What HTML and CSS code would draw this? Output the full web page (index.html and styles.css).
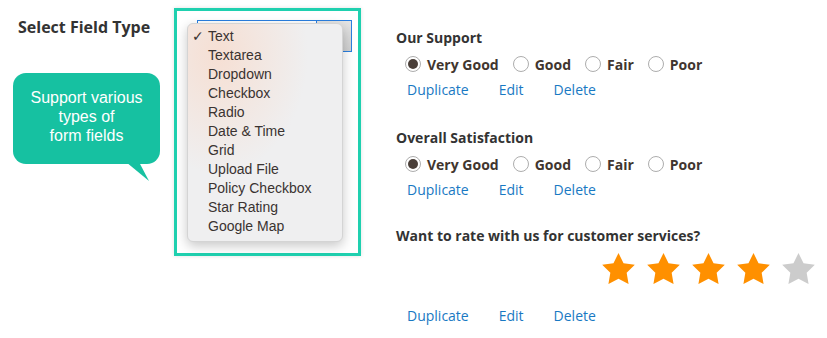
FILE: index.html
```html
<!DOCTYPE html>
<html lang="en">
<head>
    <meta charset="UTF-8">
    <meta name="viewport" content="width=device-width, initial-scale=1.0">
    <title>Select Field Type</title>
    <link rel="stylesheet" href="styles.css">
</head>
<body>
    <div class="page">
        <div class="intro">
            <div class="intro-label">Select Field Type</div>
            <div class="bubble">
                Support various<br>types of<br>form fields
                <svg class="bubble-tail" width="30" height="22" viewBox="0 0 30 22">
                    <polygon points="0,0 13,0 23,19" fill="#16c1a1"/>
                </svg>
            </div>
        </div>

        <div class="picker">
            <div class="select">
                <span class="select-value"></span>
                <span class="select-arrow"></span>
            </div>
            <ul class="menu">
                <li class="menu-item selected">Text</li>
                <li class="menu-item">Textarea</li>
                <li class="menu-item">Dropdown</li>
                <li class="menu-item">Checkbox</li>
                <li class="menu-item">Radio</li>
                <li class="menu-item">Date &amp; Time</li>
                <li class="menu-item">Grid</li>
                <li class="menu-item">Upload File</li>
                <li class="menu-item">Policy Checkbox</li>
                <li class="menu-item">Star Rating</li>
                <li class="menu-item">Google Map</li>
            </ul>
        </div>

        <div class="form">
            <div class="field">
                <div class="field-title">Our Support</div>
                <div class="options">
                    <label class="option"><span class="radio checked"></span>Very Good</label>
                    <label class="option"><span class="radio"></span>Good</label>
                    <label class="option"><span class="radio"></span>Fair</label>
                    <label class="option"><span class="radio"></span>Poor</label>
                </div>
                <div class="actions">
                    <a href="#">Duplicate</a>
                    <a href="#">Edit</a>
                    <a href="#">Delete</a>
                </div>
            </div>

            <div class="field field-tight">
                <div class="field-title">Overall Satisfaction</div>
                <div class="options">
                    <label class="option"><span class="radio checked"></span>Very Good</label>
                    <label class="option"><span class="radio"></span>Good</label>
                    <label class="option"><span class="radio"></span>Fair</label>
                    <label class="option"><span class="radio"></span>Poor</label>
                </div>
                <div class="actions">
                    <a href="#">Duplicate</a>
                    <a href="#">Edit</a>
                    <a href="#">Delete</a>
                </div>
            </div>

            <div class="field">
                <div class="field-title">Want to rate with us for customer services?</div>
                <div class="stars">
                    <svg class="star on" viewBox="2 2 20 19"><polygon points="12,2 15.09,8.26 22,9.27 17,14.14 18.18,21.02 12,17.77 5.82,21.02 7,14.14 2,9.27 8.91,8.26"/></svg>
                    <svg class="star on" viewBox="2 2 20 19"><polygon points="12,2 15.09,8.26 22,9.27 17,14.14 18.18,21.02 12,17.77 5.82,21.02 7,14.14 2,9.27 8.91,8.26"/></svg>
                    <svg class="star on" viewBox="2 2 20 19"><polygon points="12,2 15.09,8.26 22,9.27 17,14.14 18.18,21.02 12,17.77 5.82,21.02 7,14.14 2,9.27 8.91,8.26"/></svg>
                    <svg class="star on" viewBox="2 2 20 19"><polygon points="12,2 15.09,8.26 22,9.27 17,14.14 18.18,21.02 12,17.77 5.82,21.02 7,14.14 2,9.27 8.91,8.26"/></svg>
                    <svg class="star" viewBox="2 2 20 19"><polygon points="12,2 15.09,8.26 22,9.27 17,14.14 18.18,21.02 12,17.77 5.82,21.02 7,14.14 2,9.27 8.91,8.26"/></svg>
                </div>
                <div class="actions actions-low">
                    <a href="#">Duplicate</a>
                    <a href="#">Edit</a>
                    <a href="#">Delete</a>
                </div>
            </div>
        </div>
    </div>
</body>
</html>
```

FILE: styles.css
```css
body {
    margin: 0;
    background: #fff;
    font-family: "Open Sans", sans-serif;
    color: #333;
}
.page {
    display: flex;
    align-items: flex-start;
}

/* left: label and bubble */
.intro {
    width: 174px;
    padding-top: 17px;
}
.intro-label {
    padding-left: 18px;
    font-size: 16px;
    font-weight: 700;
    line-height: 21px;
    color: #333;
}
.bubble {
    position: relative;
    width: 147px;
    height: 91px;
    margin: 35px 0 0 13px;
    padding-top: 15px;
    box-sizing: border-box;
    border-radius: 13px;
    background-color: #16c1a1;
    color: #fff;
    font-family: "Liberation Sans", Arial, sans-serif;
    font-size: 16px;
    line-height: 19px;
    text-align: center;
}
.bubble-tail {
    position: absolute;
    left: 113px;
    top: 89px;
}

/* middle: select with open menu */
.picker {
    position: relative;
    width: 181px;
    height: 242px;
    margin-top: 8px;
    border: 3px solid #1fd0af;
    box-shadow: 0 0 4px rgba(0, 0, 0, 0.12);
    background: #fff;
}
.select {
    display: flex;
    width: 155px;
    height: 32px;
    margin: 9px 0 0 20px;
    box-sizing: border-box;
    border: 1px solid #2a7fe0;
}
.select-value {
    flex: 1;
    border-right: 1px solid #2a7fe0;
}
.select-arrow {
    width: 34px;
    background: linear-gradient(#e4e4e4, #cfcfcf);
}
.menu {
    position: absolute;
    left: 10px;
    top: 12px;
    width: 156px;
    margin: 0;
    padding: 3px 0 5px;
    box-sizing: border-box;
    list-style: none;
    border: 1px solid #d4d4d4;
    border-radius: 6px;
    background: radial-gradient(ellipse 90px 120px at 30px 30px, #f6dfd3, rgba(240, 240, 240, 0) 100%), #efeff0;
    box-shadow: 0 4px 12px rgba(0, 0, 0, 0.22);
    font-family: "Liberation Sans", Arial, sans-serif;
    font-size: 14px;
    line-height: 19px;
    color: #3a3331;
}
.menu-item {
    position: relative;
    padding-left: 20px;
}
.menu-item.selected::before {
    content: "\2713";
    position: absolute;
    left: 4px;
    font-family: "DejaVu Sans", sans-serif;
    font-size: 14px;
    font-weight: 700;
}

/* right: form fields */
.form {
    margin-left: 35px;
    padding-top: 25px;
    flex: 1;
}
.field {
    margin-bottom: 22px;
}
.field-tight {
    margin-bottom: 20px;
}
.field-title {
    font-size: 14px;
    font-weight: 700;
    line-height: 26px;
    color: #333;
}
.options {
    display: flex;
    align-items: center;
    height: 26px;
    padding-left: 9px;
}
.option {
    display: flex;
    align-items: center;
    margin-right: 14px;
    font-size: 14px;
    font-weight: 700;
    color: #41362f;
}
.radio {
    width: 14px;
    height: 14px;
    margin-right: 6px;
    border: 1px solid #adadad;
    border-radius: 50%;
    background: #fff;
    position: relative;
}
.radio.checked::after {
    content: "";
    position: absolute;
    left: 2px;
    top: 2px;
    width: 10px;
    height: 10px;
    border-radius: 50%;
    background: #4a3f39;
}
.actions {
    display: flex;
    gap: 30px;
    padding-left: 11px;
    line-height: 26px;
}
.actions a {
    font-size: 14px;
    color: #1979c3;
    text-decoration: none;
}
.actions-low {
    margin-top: 19px;
}
.stars {
    display: flex;
    gap: 12px;
    margin: 4px 0 0 206px;
}
.star {
    width: 33px;
    height: 31px;
    fill: #cccccc;
}
.star.on {
    fill: #ff9000;
}
```
